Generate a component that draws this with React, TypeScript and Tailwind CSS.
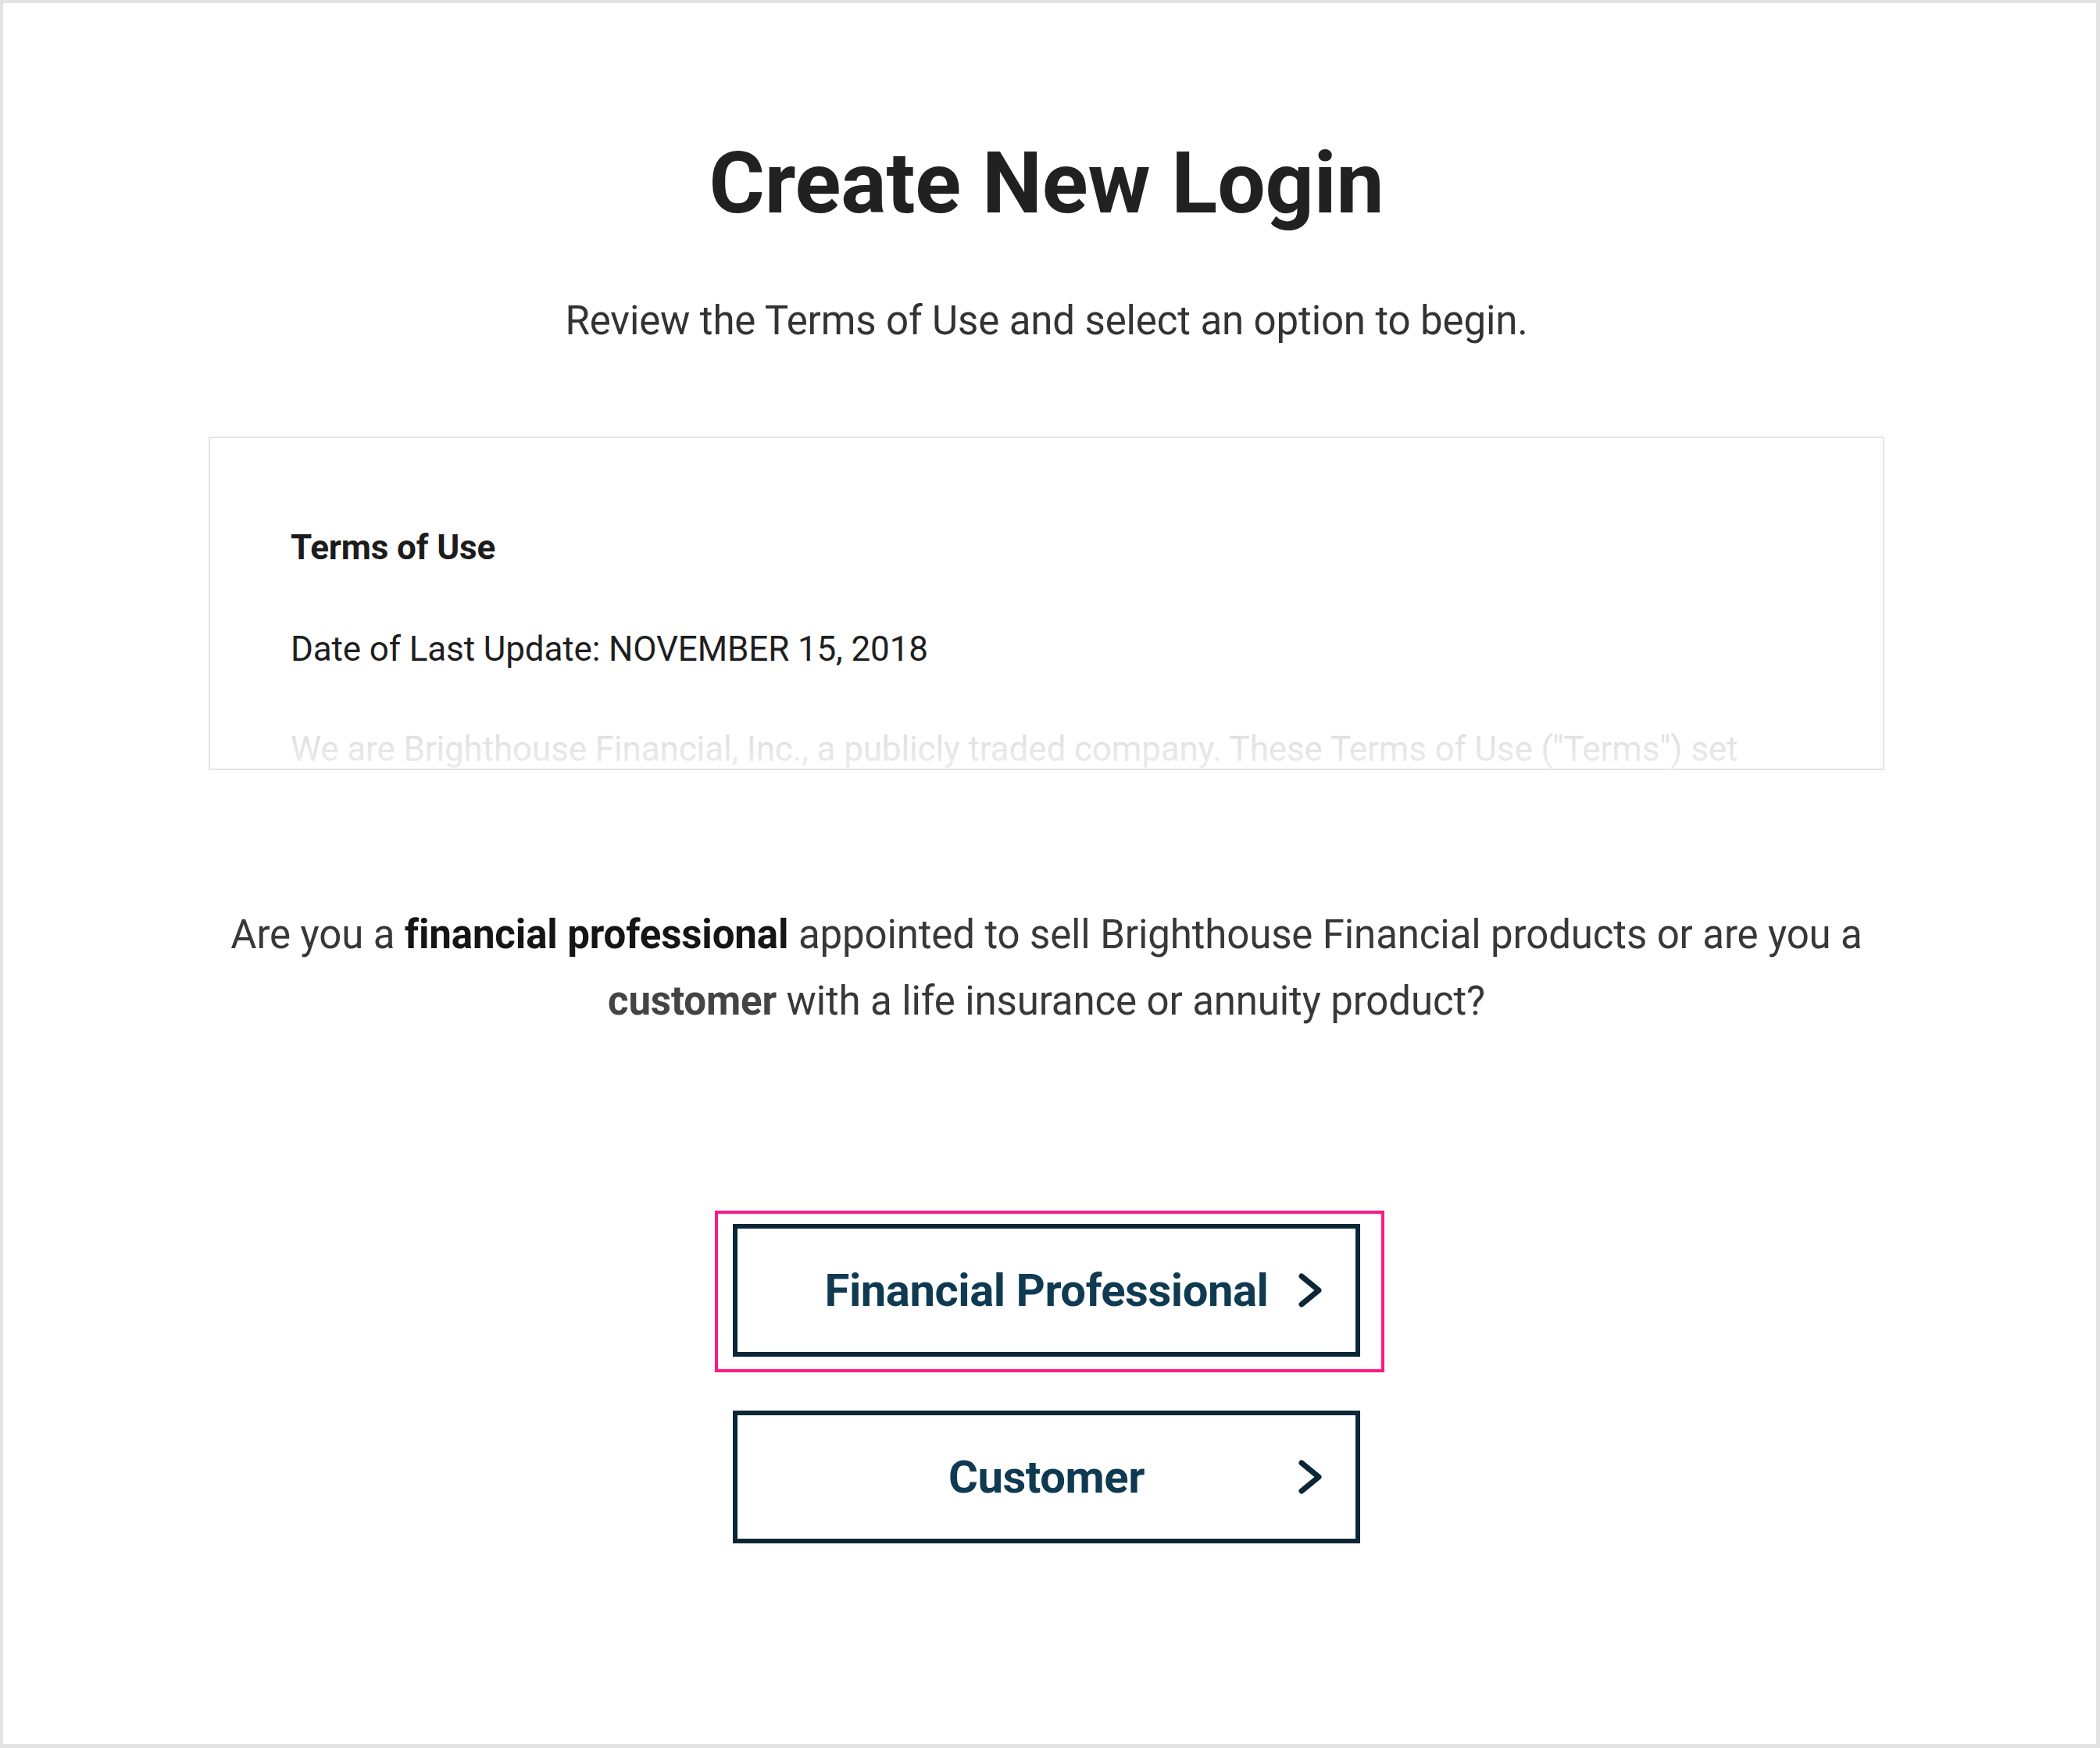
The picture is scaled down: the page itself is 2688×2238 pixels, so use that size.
import { ReactNode } from "react";

function Chevron() {
  return (
    <svg width="34" height="48" viewBox="0 0 34 48" fill="none" aria-hidden="true">
      <polyline
        points="6,6 28,24 6,42"
        stroke="currentColor"
        strokeWidth="7"
        strokeLinecap="round"
        strokeLinejoin="round"
      />
    </svg>
  );
}

function RoleButton({ children }: { children: ReactNode }) {
  return (
    <button
      type="button"
      className="relative flex h-[170px] w-[803px] items-center justify-center border-[6px] border-[#0b2636] bg-white text-[58px] leading-none font-bold tracking-[-0.008em] text-[#0f3a52]"
    >
      <span>{children}</span>
      <span className="absolute right-[41px] top-1/2 -translate-y-1/2 text-[#0b2636]">
        <Chevron />
      </span>
    </button>
  );
}

export default function App() {
  return (
    <div
      className="h-[2238px] w-[2688px] border-t-4 border-l-4 border-r-[5px] border-b-[5px] border-[#e3e3e3] bg-white tracking-[-0.008em]"
      style={{ fontFamily: "Roboto, 'Noto Sans', sans-serif" }}
    >
      <div className="flex flex-col items-center pr-[8px] pt-[167px]">
        {/* Heading */}
        <h1 className="text-[109px] leading-[128px] font-bold text-[#212121]">
          Create New Login
        </h1>
        <p className="mt-[82px] text-[51px] leading-[60px] text-[#333333]">
          Review the Terms of Use and select an option to begin.
        </p>

        {/* Terms of Use preview */}
        <div className="relative mt-[118px] h-[427px] w-[2145px] overflow-hidden border-2 border-[#e5e5e5] px-[103px] pt-[114px]">
          <h2 className="text-[44px] leading-[52px] font-bold text-[#1c1c1c]">
            Terms of Use
          </h2>
          <p className="mt-[78px] text-[44px] leading-[52px] text-[#1f1f1f]">
            Date of Last Update: NOVEMBER 15, 2018
          </p>
          <p className="mt-[76px] max-w-[1880px] text-[44px] leading-[52px] text-[#d2d2d2]">
            We are Brighthouse Financial, Inc., a publicly traded company. These Terms of Use
            ("Terms") set forth the terms and conditions that apply to your use of this website.
          </p>
          <div className="pointer-events-none absolute inset-x-0 bottom-0 h-[90px] bg-gradient-to-b from-white/0 to-white/60" />
        </div>

        {/* Role question */}
        <p className="mt-[168px] max-w-[2140px] text-center text-[51px] leading-[85px] text-[#383838]">
          Are you a <strong className="font-bold text-[#151515]">financial professional</strong>{" "}
          appointed to sell Brighthouse Financial products or are you a{" "}
          <strong className="font-bold text-[#444444]">customer</strong> with a life insurance or
          annuity product?
        </p>

        {/* Role choices */}
        <div className="mt-[226px] flex w-[803px] flex-col">
          <div className="-ml-[23px] -mr-[31px] border-4 border-[#fb1a86] pt-[13px] pr-[27px] pb-[16px] pl-[19px]">
            <RoleButton>Financial Professional</RoleButton>
          </div>
          <div className="mt-[49px]">
            <RoleButton>Customer</RoleButton>
          </div>
        </div>
      </div>
    </div>
  );
}
